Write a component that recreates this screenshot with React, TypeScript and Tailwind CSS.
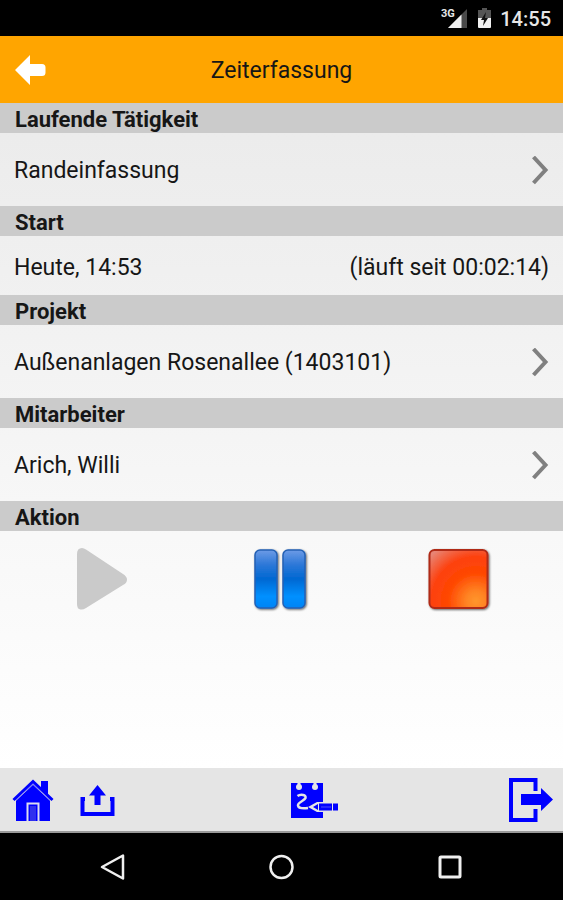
import type { ReactNode } from 'react';

interface SectionProps {
  title: string;
  children: ReactNode;
}

function Section({ title, children }: SectionProps) {
  return (
    <section>
      <h2 className="bg-[#cbcbcb] px-[15px] pt-[3px] text-[22px] leading-[27px] font-bold text-[#161616]">
        {title}
      </h2>
      {children}
    </section>
  );
}

/** Tappable row that leads to a picker. */
function LinkRow({ label }: { label: string }) {
  return (
    <button
      type="button"
      className="flex w-full items-center justify-between pt-[23px] pr-[13px] pb-[21px] pl-[14px] text-left leading-[29px]"
    >
      <span>{label}</span>
      <svg className="h-[29px] w-[20px]" viewBox="0 0 20 29" fill="none" aria-hidden="true">
        <path d="M3.500 1 L15.500 14 L3.500 27" stroke="#808080" strokeWidth="4" />
      </svg>
    </button>
  );
}

function StatusBar() {
  return (
    <div className="flex h-9 items-center justify-end bg-black pt-0.5 pr-3 text-[#e6e6e6]">
      <svg className="mr-[10px] h-[24px] w-[26px]" viewBox="0 1 26 24" aria-hidden="true">
        <path d="M26 3 V22 H7 Z" fill="#4a4a4a" />
        <path d="M20.500 8.500 V22 H7 Z" fill="#efefef" />
        <text x="0" y="11" fontSize="11" fontWeight="700" fontFamily="Roboto, sans-serif" fill="#e6e6e6">
          3G
        </text>
      </svg>
      <svg className="mr-[8px] h-[22px] w-[15px]" viewBox="0 1 15 22" aria-hidden="true">
        <path d="M5 1 H10 V3 H14 V12 H1 V3 H5 Z" fill="#555555" />
        <path d="M1 11 H14 V20 Q14 21 13 21 H2 Q1 21 1 20 Z" fill="#f2f2f2" />
        <path d="M9 5 L4 13 H7 L6 19 L11 11 H8 Z" fill="#111111" />
      </svg>
      <span className="text-[20px] leading-[24px] font-medium">14:55</span>
    </div>
  );
}

function PlayIcon() {
  return (
    <svg className="h-[68px] w-[68px]" viewBox="2 0 68 68" aria-hidden="true">
      <path
        d="M11 9 Q11 3 16 3 Q18 3 20 4.500 L57 29 Q61 31.500 61 34.500 Q61 38 57 40 L20 63 Q17 65 14.500 64.500 Q11 64 11 59 Z"
        fill="#cacaca"
      />
    </svg>
  );
}

function PauseIcon() {
  return (
    <svg className="h-[68px] w-[68px]" viewBox="0 0 68 68" aria-hidden="true">
      <defs>
        <linearGradient id="pause-fill" x1="0" y1="0" x2="0" y2="1">
          <stop offset="0" stopColor="#6d9be6" />
          <stop offset="0.25" stopColor="#2d78d8" />
          <stop offset="0.5" stopColor="#0068d2" />
          <stop offset="0.8" stopColor="#0090ff" />
          <stop offset="1" stopColor="#0084f5" />
        </linearGradient>
        <filter id="pause-shadow" x="-20%" y="-20%" width="150%" height="150%">
          <feDropShadow dx="1" dy="1" stdDeviation="0.8" floodColor="#000000" floodOpacity="0.6" />
        </filter>
      </defs>
      <g filter="url(#pause-shadow)" fill="url(#pause-fill)" stroke="#2460b4" strokeWidth="1.500">
        <rect x="8" y="5" width="22" height="58" rx="5" />
        <rect x="36" y="5" width="22" height="58" rx="5" />
      </g>
    </svg>
  );
}

function StopIcon() {
  return (
    <svg className="h-[68px] w-[68px]" viewBox="2 0 68 68" aria-hidden="true">
      <defs>
        <radialGradient id="stop-fill" cx="0.8" cy="0.88" r="1.100">
          <stop offset="0" stopColor="#ff962c" />
          <stop offset="0.15" stopColor="#ff8424" />
          <stop offset="0.45" stopColor="#ff4600" />
          <stop offset="0.7" stopColor="#fd4210" />
          <stop offset="1" stopColor="#e88474" />
        </radialGradient>
        <filter id="stop-shadow" x="-20%" y="-20%" width="150%" height="150%">
          <feDropShadow dx="1" dy="1" stdDeviation="0.8" floodColor="#000000" floodOpacity="0.6" />
        </filter>
      </defs>
      <rect
        x="4.500"
        y="5"
        width="58"
        height="58"
        rx="5"
        fill="url(#stop-fill)"
        stroke="#b02a18"
        strokeWidth="2"
        filter="url(#stop-shadow)"
      />
    </svg>
  );
}

function Toolbar() {
  return (
    <nav className="flex h-[65px] items-center justify-between border-b-2 border-[#9a9a9a] bg-[#e5e5e5] pr-[9px] pl-3">
      <div className="flex items-center gap-[26px] pr-1">
        <button type="button" aria-label="Startseite">
          <svg className="h-[44px] w-[42px]" viewBox="0 -1 42 44" aria-hidden="true">
            <path d="M29 2 H36 V17 L29 10 Z" fill="#0000ff" />
            <path d="M4 21 L21 5 L38 21 V42 H4 Z" fill="#0000ff" />
            <path d="M1.500 21 L21 2.500 L40.500 21" fill="none" stroke="#0000ff" strokeWidth="3" />
            <path d="M4 21.500 L21 5.500 L38 21.500" fill="none" stroke="#9d9df2" strokeWidth="1" />
            <path d="M15.500 42 V24.500 H26.500 V42" fill="none" stroke="#dcdcf0" strokeWidth="2" />
            <rect x="18" y="27" width="6" height="15" fill="#3030ee" />
          </svg>
        </button>
        <button type="button" aria-label="Senden">
          <svg className="h-[34px] w-[35px]" viewBox="0 -1 35 34" aria-hidden="true">
            <path d="M17.500 1 L26 11.500 H20.500 V21 H14.500 V11.500 H9 Z" fill="#0000ff" />
            <path d="M5 15 H2.500 V30 H32.500 V15 H30" fill="none" stroke="#0000ff" strokeWidth="4" />
          </svg>
        </button>
      </div>
      <button type="button" aria-label="Notiz">
        <svg className="h-[38px] w-[48px]" viewBox="0 0 48 38" aria-hidden="true">
          <path d="M1 2 H33 V37 H1 Z" fill="#0000ff" />
          <path d="M9 0 V6 M25 0 V6" stroke="#e5e5e5" strokeWidth="3" />
          <circle cx="9" cy="6" r="3" fill="#e5e5e5" />
          <circle cx="25" cy="6" r="3" fill="#e5e5e5" />
          <path
            d="M7.500 15 C11 12.500 16.500 14 15.500 17 C14.500 20 7.500 21 8 24.500 C8.500 28 14 27.500 18 27"
            fill="none"
            stroke="#e5e5e5"
            strokeWidth="2.500"
          />
          <path d="M18 26 L27 21 H33 V31 H27 Z" fill="#e5e5e5" />
          <path d="M23 26 L28 23 V29 Z M29 22.500 H42 V29.500 H29 Z M43 22.500 H48 V29.500 H43 Z" fill="#0000ff" />
          <path d="M31 26 H41" stroke="#4a4aff" strokeWidth="1" />
        </svg>
      </button>
      <button type="button" aria-label="Abmelden">
        <svg className="h-[46px] w-[46px]" viewBox="0 0 46 46" aria-hidden="true">
          <path d="M27.500 14 V3 H3 V43 H27.500 V32" fill="none" stroke="#0000ff" strokeWidth="4" />
          <path d="M13 17 H33 V11 L45 22.500 L33 34 V28 H13 Z" fill="#0000ff" />
        </svg>
      </button>
    </nav>
  );
}

function SystemNav() {
  return (
    <div className="flex h-[67px] items-center justify-around bg-black px-[29px]">
      <button type="button" aria-label="Zurück">
        <svg className="h-[28px] w-[28px]" viewBox="0 0 28 28" aria-hidden="true">
          <path
            d="M24 2.500 V25.500 L3 14 Z"
            fill="none"
            stroke="#f0f0f0"
            strokeWidth="2.500"
            strokeLinejoin="round"
          />
        </svg>
      </button>
      <button type="button" aria-label="Home">
        <svg className="h-[28px] w-[28px]" viewBox="0 0 28 28" aria-hidden="true">
          <circle cx="14.500" cy="14" r="11" fill="none" stroke="#f0f0f0" strokeWidth="2.500" />
        </svg>
      </button>
      <button type="button" aria-label="Übersicht">
        <svg className="h-[28px] w-[28px]" viewBox="0 0 28 28" aria-hidden="true">
          <rect
            x="4"
            y="4"
            width="20"
            height="20"
            rx="1"
            fill="none"
            stroke="#f0f0f0"
            strokeWidth="3"
          />
        </svg>
      </button>
    </div>
  );
}

export default function App() {
  return (
    <div className="flex min-h-screen flex-col font-['Roboto',sans-serif] text-[23px] text-[#161616]">
      <StatusBar />
      <header className="grid h-[67px] grid-cols-[1fr_auto_1fr] items-center bg-[#ffa500] px-[15px]">
        <button type="button" aria-label="Zurück" className="justify-self-start">
          <svg className="h-[32px] w-[31px]" viewBox="0 0 31 32" aria-hidden="true">
            <path
              d="M0 16 L15 1 V10 H27 Q30.500 10 30.500 13.500 V18.500 Q30.500 22 27 22 H15 V31 Z"
              fill="#ffffff"
            />
          </svg>
        </button>
        <h1 className="pt-0.5 leading-[30px]">Zeiterfassung</h1>
      </header>

      <main className="flex-1 bg-linear-to-b from-[#ebebeb] to-white">
        <Section title="Laufende Tätigkeit">
          <LinkRow label="Randeinfassung" />
        </Section>
        <Section title="Start">
          <div className="flex justify-between px-[14px] pt-[17px] pb-[13px] leading-[29px]">
            <span>Heute, 14:53</span>
            <span>(läuft seit 00:02:14)</span>
          </div>
        </Section>
        <Section title="Projekt">
          <LinkRow label="Außenanlagen Rosenallee (1403101)" />
        </Section>
        <Section title="Mitarbeiter">
          <LinkRow label="Arich, Willi" />
        </Section>
        <Section title="Aktion">
          <div className="flex justify-around px-[12px] pt-[14px]">
            <button type="button" aria-label="Start" disabled>
              <PlayIcon />
            </button>
            <button type="button" aria-label="Pause">
              <PauseIcon />
            </button>
            <button type="button" aria-label="Stopp">
              <StopIcon />
            </button>
          </div>
        </Section>
      </main>

      <Toolbar />
      <SystemNav />
    </div>
  );
}
